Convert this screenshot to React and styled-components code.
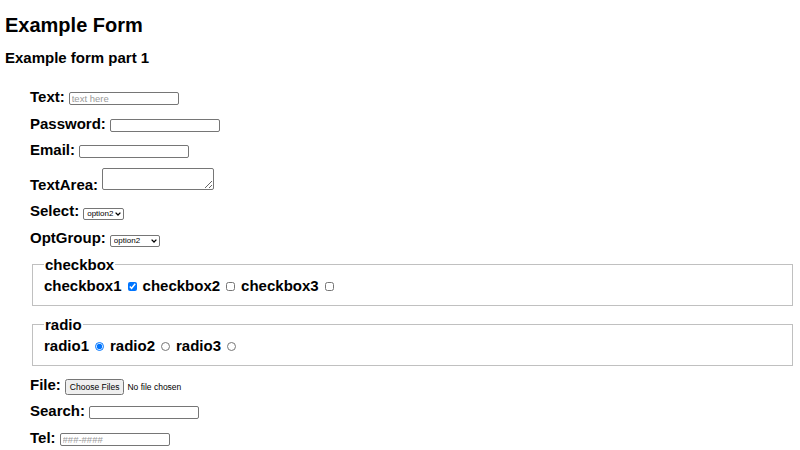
import styled, { createGlobalStyle } from "styled-components";

const GlobalStyle = createGlobalStyle`
  body {
    margin: 5px;
    font-family: "Liberation Sans", Arial, sans-serif;
    color: #000;
    background: #fff;
  }
`;

const Title = styled.h1`
  font-size: 20px;
  margin: 9px 0 12px;
`;

const Subtitle = styled.h2`
  font-size: 15px;
  margin: 0 0 22px;
`;

const Form = styled.form`
  padding-left: 25px;
`;

const Row = styled.div`
  font-size: 15px;
  font-weight: bold;
  margin-bottom: 9.5px;
`;

const Field = styled.input`
  box-sizing: content-box;
  font-family: "Liberation Sans", Arial, sans-serif;
  font-size: 9.5px;
  width: 104px;
  height: 9px;
  padding: 1px 2px;
  margin: 0 0 0 4px;
  border: 1px solid #767676;
  border-radius: 2px;
  &::placeholder {
    color: #9a9a9a;
  }
`;

const Area = styled.textarea`
  font-size: 9.5px;
  width: 106px;
  height: 16px;
  padding: 2px;
  margin: 0 0 0 4px;
  border: 1px solid #767676;
  border-radius: 2px;
  vertical-align: baseline;
`;

const PickerWrap = styled.span`
  position: relative;
  display: inline-flex;
  margin-left: 4px;
  font-weight: normal;
`;

const Picker = styled.select`
  appearance: none;
  box-sizing: border-box;
  font-family: "Liberation Sans", Arial, sans-serif;
  font-size: 8px;
  color: #000;
  background: #fff;
  width: ${(p) => p.$w}px;
  height: 12px;
  padding: 0 0 0 3px;
  margin: 0;
  border: 1px solid #767676;
  border-radius: 2px;
`;

const Chevron = styled.svg`
  position: absolute;
  right: 3px;
  top: 50%;
  width: 6px;
  height: 4px;
  margin-top: -2px;
  pointer-events: none;
`;

const FileInput = styled.input`
  font-family: "Liberation Sans", Arial, sans-serif;
  font-size: 8.5px;
  font-weight: normal;
  margin-left: 4px;
  &::file-selector-button {
    font-size: 8.5px;
    padding: 1px 3px;
    margin-right: 3px;
  }
`;

const FileRow = styled(Row)`
  margin-bottom: 7px;
`;

const Group = styled.fieldset`
  font-size: 15px;
  font-weight: bold;
  margin: 0 2px 10px;
  padding: 4px 11px 11px;
  border: 1px solid #c0c0c0;
`;

const Legend = styled.legend`
  padding: 0 1px;
`;

const Tick = styled.input`
  width: 9px;
  height: 9px;
  margin: 0 6px;
`;

const Dropdown = ({ width, children }) => (
  <PickerWrap>
    <Picker $w={width} defaultValue="option2">
      {children}
    </Picker>
    <Chevron viewBox="0 0 6 4">
      <path d="M0.6 0.6 L3 3 L5.4 0.6" fill="none" stroke="#000" strokeWidth="1.3" />
    </Chevron>
  </PickerWrap>
);

export default function App() {
  return (
    <>
      <GlobalStyle />
      <Title>Example Form</Title>
      <Subtitle>Example form part 1</Subtitle>
      <Form>
        <Row>
          Text:<Field type="text" placeholder="text here" />
        </Row>
        <Row>
          Password:<Field type="password" />
        </Row>
        <Row>
          Email:<Field type="email" />
        </Row>
        <Row>
          TextArea:<Area />
        </Row>
        <Row>
          Select:
          <Dropdown width={41}>
            <option>option1</option>
            <option>option2</option>
            <option>option3</option>
          </Dropdown>
        </Row>
        <Row>
          OptGroup:
          <Dropdown width={50}>
            <optgroup label="group1">
              <option>option1</option>
              <option>option2</option>
            </optgroup>
            <optgroup label="group2">
              <option>option3</option>
            </optgroup>
          </Dropdown>
        </Row>
        <Group>
          <Legend>checkbox</Legend>
          checkbox1
          <Tick type="checkbox" defaultChecked />
          checkbox2
          <Tick type="checkbox" />
          checkbox3
          <Tick type="checkbox" />
        </Group>
        <Group>
          <Legend>radio</Legend>
          radio1
          <Tick type="radio" name="r" defaultChecked />
          radio2
          <Tick type="radio" name="r" />
          radio3
          <Tick type="radio" name="r" />
        </Group>
        <FileRow>
          File:<FileInput type="file" multiple />
        </FileRow>
        <Row>
          Search:<Field type="search" />
        </Row>
        <Row>
          Tel:<Field type="tel" placeholder="###-####" />
        </Row>
      </Form>
    </>
  );
}
